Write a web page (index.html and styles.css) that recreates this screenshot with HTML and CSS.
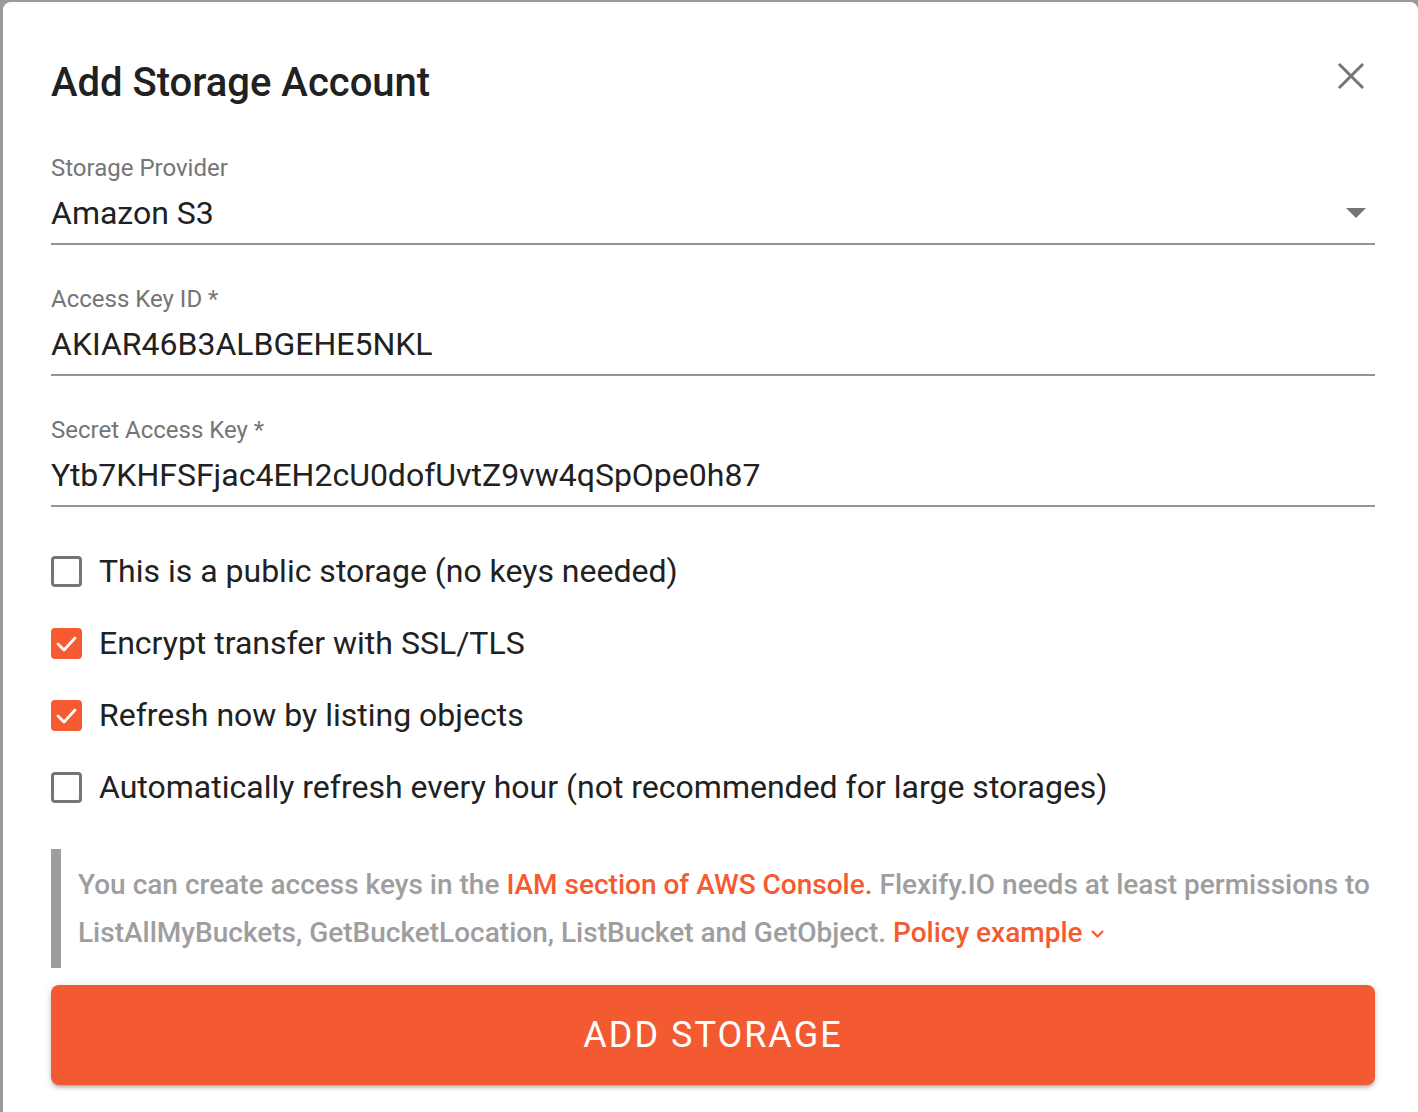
FILE: index.html
```html
<!DOCTYPE html>
<html>
<head>
<meta charset="utf-8">
<link rel="stylesheet" href="styles.css">
</head>
<body>
<div class="dialog">
  <div class="header">
    <h1 class="title">Add Storage Account</h1>
    <button class="close" aria-label="Close">
      <svg width="28" height="28" viewBox="0 0 28 28"><path d="M2 2 L26 26 M26 2 L2 26" stroke="#757575" stroke-width="3" fill="none"/></svg>
    </button>
  </div>

  <div class="field">
    <div class="label">Storage Provider</div>
    <div class="control">
      <span class="value">Amazon S3</span>
      <svg class="caret" width="20" height="11" viewBox="0 0 20 11"><path d="M0 0 L20 0 L10 10 Z" fill="#757575"/></svg>
    </div>
  </div>

  <div class="field">
    <div class="label">Access Key ID *</div>
    <div class="control"><span class="value">AKIAR46B3ALBGEHE5NKL</span></div>
  </div>

  <div class="field">
    <div class="label">Secret Access Key *</div>
    <div class="control"><span class="value">Ytb7KHFSFjac4EH2cU0dofUvtZ9vw4qSpOpe0h87</span></div>
  </div>

  <div class="checks">
    <div class="check">
      <span class="box"></span>
      <span class="check-label">This is a public storage (no keys needed)</span>
    </div>
    <div class="check">
      <span class="box checked"><svg width="31" height="31" viewBox="0 0 31 31"><path d="M7 16 L13 22 L24 10" stroke="#fff" stroke-width="2.8" fill="none" stroke-linecap="round" stroke-linejoin="round"/></svg></span>
      <span class="check-label">Encrypt transfer with SSL/TLS</span>
    </div>
    <div class="check">
      <span class="box checked"><svg width="31" height="31" viewBox="0 0 31 31"><path d="M7 16 L13 22 L24 10" stroke="#fff" stroke-width="2.8" fill="none" stroke-linecap="round" stroke-linejoin="round"/></svg></span>
      <span class="check-label">Refresh now by listing objects</span>
    </div>
    <div class="check">
      <span class="box"></span>
      <span class="check-label">Automatically refresh every hour (not recommended for large storages)</span>
    </div>
  </div>

  <blockquote class="note">
    You can create access keys in the <a class="link" href="#">IAM section of AWS Console.</a> Flexify.IO needs at least permissions to<br>ListAllMyBuckets, GetBucketLocation, ListBucket and GetObject. <a class="link" href="#">Policy example<svg class="chev" width="15" height="10" viewBox="0 0 15 10"><path d="M2 2 L7.5 7.5 L13 2" stroke="#f55a30" stroke-width="2.2" fill="none"/></svg></a>
  </blockquote>

  <button class="primary">ADD STORAGE</button>
</div>
</body>
</html>
```
FILE: styles.css
```css
html, body {
  margin: 0;
  padding: 0;
  background: #9a9a9a;
  height: 100%;
  overflow: hidden;
}
body {
  font-family: Roboto, "Noto Sans", Arial, sans-serif;
  padding: 2px 0 0 3px;
  box-sizing: border-box;
}
.dialog {
  background: #fff;
  border-radius: 8px 8px 0 0;
  min-height: 1120px;
  padding: 57px 43px 0 48px;
  box-sizing: border-box;
}
.header {
  display: flex;
  justify-content: space-between;
  align-items: flex-start;
}
.title {
  margin: 0;
  font-size: 40px;
  line-height: 48px;
  font-weight: 500;
  color: #212121;
}
.close {
  border: 0;
  background: none;
  padding: 0;
  margin: 3px 10px 0 0;
  width: 28px;
  height: 28px;
}
.close svg { display: block; }
.field {
  margin-top: 47px;
}
.field + .field {
  margin-top: 40px;
}
.label {
  font-size: 24px;
  line-height: 28px;
  color: #757575;
}
.control {
  margin-top: 11px;
  display: flex;
  align-items: center;
  justify-content: space-between;
  padding-bottom: 10px;
  border-bottom: 2px solid #949494;
}
.value {
  font-size: 32px;
  line-height: 40px;
  color: #212121;
}
.caret {
  margin-right: 9px;
  display: block;
}
.checks {
  margin-top: 28px;
  display: flex;
  flex-direction: column;
}
.check {
  height: 72px;
  display: flex;
  align-items: center;
  gap: 17px;
}
.box {
  width: 31px;
  height: 31px;
  box-sizing: border-box;
  border: 3px solid #757575;
  border-radius: 4px;
  flex: none;
  margin-top: 1px;
}
.box.checked {
  border: 0;
  background: #f55a30;
}
.box svg { display: block; }
.check-label {
  font-size: 32px;
  line-height: 40px;
  color: #212121;
}
.note {
  margin: 26px 0 0 0;
  border-left: 10px solid #9e9e9e;
  padding: 12px 0 11px 17px;
  font-size: 28px;
  font-weight: 500;
  line-height: 48px;
  color: #9e9e9e;
  white-space: nowrap;
}
.link {
  color: #f55a30;
  text-decoration: none;
}
.chev {
  margin-left: 7px;
  vertical-align: 3px;
}
.primary {
  display: block;
  width: 100%;
  margin-top: 17px;
  height: 100px;
  border: 0;
  border-radius: 8px;
  background: #f45a32;
  color: #fff;
  font-family: Roboto, "Noto Sans", Arial, sans-serif;
  font-size: 36px;
  letter-spacing: 2px;
  font-weight: 400;
  box-shadow: 0 3px 3px -2px rgba(0,0,0,0.2), 0 3px 4px 0 rgba(0,0,0,0.14), 0 1px 8px 0 rgba(0,0,0,0.12);
}
```
